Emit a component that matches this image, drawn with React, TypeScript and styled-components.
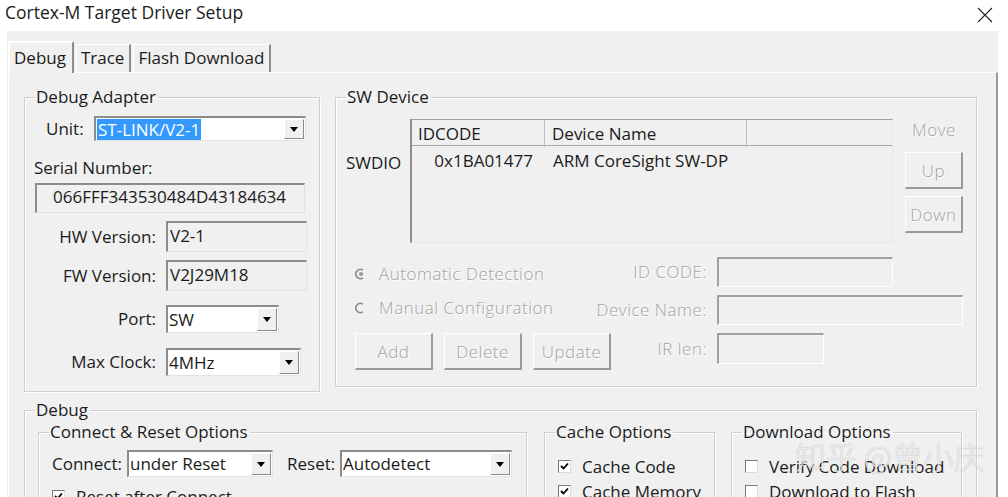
import styled, { createGlobalStyle, css } from "styled-components";

const GlobalStyle = createGlobalStyle`
  body {
    margin: 0;
    background: #ffffff;
    font-family: "Open Sans", "Noto Sans CJK SC", sans-serif;
    font-size: 17px;
    color: #1b1b1b;
  }
`;

const Root = styled.div`
  position: relative;
  width: 1008px;
  height: 497px;
  overflow: hidden;
  background: #ffffff;
`;

const TitleBar = styled.div`
  height: 31px;
  display: flex;
  justify-content: space-between;
  align-items: flex-start;
  padding: 1px 15px 0 5px;
  box-sizing: border-box;
`;

const Title = styled.div`
  font-size: 17.5px;
  line-height: 22px;
`;

const CloseBtn = styled.div`
  width: 16px;
  height: 16px;
  margin-top: 4px;
`;

const Window = styled.div`
  margin-left: 7px;
  width: 991px;
  height: 466px;
  background: #f0f0f0;
`;

const TabStrip = styled.div`
  height: 41px;
  display: flex;
  align-items: flex-end;
  padding-left: 1px;
  position: relative;
  z-index: 1;
`;

const Tab = styled.div<{ $active?: boolean }>`
  box-sizing: border-box;
  padding: 0 5px 0 4px;
  height: 28px;
  line-height: 26px;
  border-left: 1px solid #ffffff;
  border-top: 1px solid #ffffff;
  border-right: 2px solid #8e8e8e;
  margin-right: 2px;
  ${(p) =>
    p.$active &&
    css`
      height: 32px;
      line-height: 30px;
      padding: 0 6px 0 4px;
      margin-bottom: -1px;
      background: #f0f0f0;
      border-left: 2px solid #ffffff;
      border-top: 2px solid #ffffff;
    `}
`;

const Panel = styled.div`
  margin-left: 1px;
  height: 425px;
  box-sizing: border-box;
  border-top: 1px solid #ffffff;
  border-left: 1px solid #ffffff;
  border-right: 2px solid #9a9a9a;
  padding: 14px 19px 0 15px;
`;

const TopRow = styled.div`
  display: flex;
  gap: 15px;
  align-items: flex-start;
`;

const Group = styled.fieldset<{ $w?: number; $h?: number }>`
  margin: 0;
  box-sizing: border-box;
  border: 1px solid #cfcfcf;
  box-shadow: inset 1px 1px 0 #ffffff, 1px 1px 0 #ffffff;
  padding: 0 13px 0 10px;
  min-width: 0;
  ${(p) => p.$w && `width: ${p.$w}px; flex: none;`}
  ${(p) => p.$h && `height: ${p.$h}px;`}
`;

const Legend = styled.legend`
  padding: 0 2px 0 1px;
  line-height: 20px;
  font-size: 17px;
`;

const Row = styled.div<{ $mt?: number }>`
  display: flex;
  align-items: center;
  margin-top: ${(p) => p.$mt ?? 0}px;
`;

const Label = styled.div<{ $w?: number; $ml?: number; $mt?: number; $right?: boolean }>`
  line-height: 20px;
  white-space: nowrap;
  ${(p) => p.$w && `width: ${p.$w}px; flex: none;`}
  margin-left: ${(p) => p.$ml ?? 0}px;
  margin-top: ${(p) => p.$mt ?? 0}px;
  text-align: ${(p) => (p.$right ? "right" : "left")};
`;

const Combo = styled.div<{ $w: number; $h: number }>`
  box-sizing: border-box;
  width: ${(p) => p.$w}px;
  height: ${(p) => p.$h}px;
  display: flex;
  background: #ffffff;
  border-top: 2px solid #8c8c8c;
  border-left: 2px solid #8c8c8c;
  border-right: 1px solid #e3e3e3;
  border-bottom: 1px solid #e3e3e3;
  flex: none;
`;

const ComboValue = styled.div`
  flex: 1;
  padding-left: 1px;
  line-height: 22px;
  display: flex;
  align-items: center;
  white-space: nowrap;
`;

const Highlight = styled.span`
  background: #3399ff;
  color: #ffffff;
  padding: 0 1px;
  line-height: 21px;
`;

const DropBtn = styled.div`
  width: 20px;
  box-sizing: border-box;
  margin: 1px 1px 1px 0;
  background: #f0f0f0;
  border-left: 1px solid #ffffff;
  border-top: 1px solid #ffffff;
  border-right: 1px solid #8a8a8a;
  border-bottom: 1px solid #8a8a8a;
  display: flex;
  align-items: center;
  justify-content: center;
  &::after {
    content: "";
    border-left: 4px solid transparent;
    border-right: 4px solid transparent;
    border-top: 5px solid #000000;
  }
`;

const ReadOnly = styled.div<{ $w: number; $h: number; $pl?: number; $disabled?: boolean }>`
  box-sizing: border-box;
  width: ${(p) => p.$w}px;
  height: ${(p) => p.$h}px;
  flex: none;
  background: #f0f0f0;
  border-top: 2px solid #8c8c8c;
  border-left: 2px solid #8c8c8c;
  border-right: 1px solid #e2e2e2;
  border-bottom: 1px solid #e2e2e2;
  padding-left: ${(p) => p.$pl ?? 2}px;
  line-height: ${(p) => p.$h - 6}px;
  white-space: nowrap;
  ${(p) =>
    p.$disabled &&
    css`
      border-top-color: #a0a0a0;
      border-left-color: #a0a0a0;
      border-right-color: #ffffff;
      border-bottom-color: #ffffff;
    `}
`;

const InfoRow = styled.div<{ $mt: number }>`
  display: grid;
  grid-template-columns: 121px 1fr;
  column-gap: 10px;
  align-items: center;
  margin-top: ${(p) => p.$mt}px;
`;

const Dim = styled.div<{ $right?: boolean }>`
  color: #a3a3a3;
  font-weight: 300;
  letter-spacing: 0.5px;
  line-height: 20px;
  white-space: nowrap;
  text-shadow: 1px 1px 0 #ffffff;
  text-align: ${(p) => (p.$right ? "right" : "left")};
`;

const TopBlock = styled.div`
  display: flex;
  align-items: flex-start;
  margin-top: 12px;
`;

const SideLabel = styled.div`
  width: 64px;
  flex: none;
  margin-top: 34px;
  line-height: 20px;
`;

const ListView = styled.div`
  width: 483px;
  height: 124px;
  box-sizing: border-box;
  flex: none;
  border-top: 1px solid #a0a0a0;
  border-left: 2px solid #8c8c8c;
  border-right: 1px solid #e6e6e6;
  border-bottom: 1px solid #e6e6e6;
`;

const ListHeader = styled.div`
  display: grid;
  grid-template-columns: 133px 202px 1fr;
  height: 25px;
  border-bottom: 1px solid #a8a8a8;
`;

const HeadCell = styled.div<{ $last?: boolean }>`
  padding-left: 6px;
  line-height: 27px;
  border-right: ${(p) => (p.$last ? "none" : "1px solid #bdbdbd")};
  &:nth-child(2) {
    padding-left: 7px;
  }
`;

const ListRow = styled.div`
  display: grid;
  grid-template-columns: 133px 202px 1fr;
  height: 28px;
  align-items: center;
`;

const Cell = styled.div<{ $right?: boolean }>`
  white-space: nowrap;
  text-align: ${(p) => (p.$right ? "right" : "left")};
  padding: ${(p) => (p.$right ? "0 12px 0 0" : "0 0 0 8px")};
`;

const MoveCol = styled.div`
  width: 58px;
  margin-left: 12px;
  display: flex;
  flex-direction: column;
  align-items: center;
  flex: none;
`;

const Button = styled.div<{ $w: number; $h: number; $mt?: number }>`
  box-sizing: border-box;
  width: ${(p) => p.$w}px;
  height: ${(p) => p.$h}px;
  margin-top: ${(p) => p.$mt ?? 0}px;
  border-top: 1px solid #ffffff;
  border-left: 1px solid #ffffff;
  border-right: 2px solid #9a9a9a;
  border-bottom: 2px solid #9a9a9a;
  display: flex;
  align-items: center;
  justify-content: center;
  flex: none;
  color: #a3a3a3;
  font-weight: 300;
  letter-spacing: 0.5px;
  text-shadow: 1px 1px 0 #ffffff;
`;

const LowerGrid = styled.div`
  display: grid;
  grid-template-columns: 240px 111px 246px;
  grid-template-rows: 30px 30px 37px;
  column-gap: 10px;
  row-gap: 8px;
  margin-top: 14px;
  align-items: center;
`;

const RadioRow = styled.div<{ $mt: number }>`
  display: flex;
  align-items: center;
  padding-left: 9px;
  gap: 12px;
  margin-top: ${(p) => p.$mt}px;
`;

const ButtonRow = styled.div`
  display: flex;
  gap: 11px;
  padding-left: 9px;
  align-self: stretch;
`;

const BottomRow = styled.div`
  display: flex;
  align-items: flex-start;
  margin: 2px 0 0 3px;
`;

const CheckRow = styled.div<{ $mt?: number }>`
  display: flex;
  align-items: center;
  gap: 11px;
  margin: ${(p) => p.$mt ?? 0}px 0 0 3px;
  line-height: 25px;
  white-space: nowrap;
`;

const Box = styled.div`
  width: 13px;
  height: 13px;
  box-sizing: border-box;
  background: #ffffff;
  border-top: 1px solid #7a7a7a;
  border-left: 1px solid #7a7a7a;
  border-right: 1px solid #dcdcdc;
  border-bottom: 1px solid #dcdcdc;
  display: flex;
  align-items: center;
  justify-content: center;
  flex: none;
`;

const Watermark = styled.div`
  position: absolute;
  left: 795px;
  top: 438px;
  font-family: "Noto Sans CJK SC", sans-serif;
  font-size: 31px;
  line-height: 36px;
  font-weight: 300;
  color: rgba(255, 255, 255, 0.8);
  text-shadow: 0 0 1px rgba(0, 0, 0, 0.35);
  pointer-events: none;
  white-space: nowrap;
`;

function Radio({ checked }: { checked?: boolean }) {
  return (
    <svg width="12" height="12" viewBox="0 0 12 12">
      <path d="M8 2.2 A4.6 4.6 0 1 0 8 9.8" fill="none" stroke="#8a8a8a" strokeWidth="1.6" />
      {checked && <circle cx="6" cy="6" r="2" fill="#9a9a9a" />}
    </svg>
  );
}

function Check({ checked }: { checked?: boolean }) {
  return (
    <Box>
      {checked && (
        <svg width="9" height="9" viewBox="0 0 9 9">
          <path d="M1 4 L3.5 6.5 L8 1.5" fill="none" stroke="#000" strokeWidth="1.8" />
        </svg>
      )}
    </Box>
  );
}

function Select({ w, h, value, selected }: { w: number; h: number; value: string; selected?: boolean }) {
  return (
    <Combo $w={w} $h={h}>
      <ComboValue>{selected ? <Highlight>{value}</Highlight> : value}</ComboValue>
      <DropBtn />
    </Combo>
  );
}

export default function App() {
  return (
    <Root>
      <GlobalStyle />
      <TitleBar>
        <Title>Cortex-M Target Driver Setup</Title>
        <CloseBtn>
          <svg width="16" height="16" viewBox="0 0 16 16">
            <path d="M1 1 L15 15 M15 1 L1 15" stroke="#222" strokeWidth="1.1" />
          </svg>
        </CloseBtn>
      </TitleBar>
      <Window>
        <TabStrip>
          <Tab $active>Debug</Tab>
          <Tab>Trace</Tab>
          <Tab>Flash Download</Tab>
        </TabStrip>
        <Panel>
          <TopRow>
            <Group $w={296} $h={305}>
              <Legend>Debug Adapter</Legend>
              <Row $mt={9}>
                <Label $w={48} $ml={11}>Unit:</Label>
                <Select w={212} h={25} value="ST-LINK/V2-1" selected />
              </Row>
              <Label $ml={-1} $mt={17}>Serial Number:</Label>
              <Row $mt={5}>
                <ReadOnly $w={270} $h={30} $pl={16}>066FFF343530484D43184634</ReadOnly>
              </Row>
              <InfoRow $mt={8}>
                <Label $right>HW Version:</Label>
                <ReadOnly $w={141} $h={31}>V2-1</ReadOnly>
              </InfoRow>
              <InfoRow $mt={8}>
                <Label $right>FW Version:</Label>
                <ReadOnly $w={141} $h={31}>V2J29M18</ReadOnly>
              </InfoRow>
              <InfoRow $mt={14}>
                <Label $right>Port:</Label>
                <Select w={113} h={28} value="SW" />
              </InfoRow>
              <InfoRow $mt={15}>
                <Label $right>Max Clock:</Label>
                <Select w={135} h={28} value="4MHz" />
              </InfoRow>
            </Group>
            <Group $h={300} style={{ flex: 1 }}>
              <Legend>SW Device</Legend>
              <TopBlock>
                <SideLabel>SWDIO</SideLabel>
                <ListView>
                  <ListHeader>
                    <HeadCell>IDCODE</HeadCell>
                    <HeadCell>Device Name</HeadCell>
                    <HeadCell $last />
                  </ListHeader>
                  <ListRow>
                    <Cell $right>0x1BA01477</Cell>
                    <Cell>ARM CoreSight SW-DP</Cell>
                    <Cell />
                  </ListRow>
                </ListView>
                <MoveCol>
                  <Dim style={{ marginTop: 1 }}>Move</Dim>
                  <Button $w={58} $h={37} $mt={12}>Up</Button>
                  <Button $w={58} $h={37} $mt={7}>Down</Button>
                </MoveCol>
              </TopBlock>
              <LowerGrid>
                <RadioRow $mt={4}>
                  <Radio checked />
                  <Dim>Automatic Detection</Dim>
                </RadioRow>
                <Dim $right>ID CODE:</Dim>
                <ReadOnly $w={176} $h={30} $disabled />
                <RadioRow $mt={-4}>
                  <Radio />
                  <Dim>Manual Configuration</Dim>
                </RadioRow>
                <Dim $right>Device Name:</Dim>
                <ReadOnly $w={246} $h={30} $disabled />
                <ButtonRow>
                  <Button $w={78} $h={37}>Add</Button>
                  <Button $w={78} $h={37}>Delete</Button>
                  <Button $w={78} $h={37}>Update</Button>
                </ButtonRow>
                <Dim $right style={{ alignSelf: "start", marginTop: 6 }}>IR len:</Dim>
                <ReadOnly $w={107} $h={31} $disabled style={{ alignSelf: "start" }} />
              </LowerGrid>
            </Group>
          </TopRow>
          <Group $h={120} style={{ marginTop: 8 }}>
            <Legend>Debug</Legend>
            <BottomRow>
              <Group $w={489} $h={100}>
                <Legend>Connect &amp; Reset Options</Legend>
                <Row $mt={8}>
                  <Label $ml={3} $w={75}>Connect:</Label>
                  <Select w={146} h={27} value="under Reset" />
                  <Label $ml={14} $w={53}>Reset:</Label>
                  <Select w={172} h={27} value="Autodetect" />
                </Row>
                <CheckRow $mt={7}>
                  <Check checked />
                  <span>Reset after Connect</span>
                </CheckRow>
              </Group>
              <Group $w={171} $h={100} style={{ marginLeft: 17 }}>
                <Legend>Cache Options</Legend>
                <CheckRow $mt={12}>
                  <Check checked />
                  <span>Cache Code</span>
                </CheckRow>
                <CheckRow>
                  <Check checked />
                  <span>Cache Memory</span>
                </CheckRow>
              </Group>
              <Group $w={231} $h={100} style={{ marginLeft: 16 }}>
                <Legend>Download Options</Legend>
                <CheckRow $mt={12}>
                  <Check />
                  <span>Verify Code Download</span>
                </CheckRow>
                <CheckRow>
                  <Check />
                  <span>Download to Flash</span>
                </CheckRow>
              </Group>
            </BottomRow>
          </Group>
        </Panel>
      </Window>
      <Watermark>知乎 @曾小庆</Watermark>
    </Root>
  );
}
